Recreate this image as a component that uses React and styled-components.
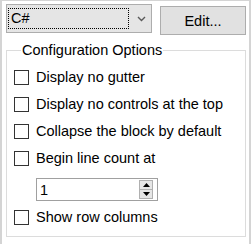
import React from "react";
import styled, { createGlobalStyle } from "styled-components";

const Global = createGlobalStyle`
  html, body { margin: 0; padding: 0; background: #ffffff; }
  body { font-family: "Liberation Sans", Arial, sans-serif; font-size: 14.5px; color: #000; }
`;

const Frame = styled.div`
  box-sizing: border-box;
  width: 251px;
  height: 244px;
  border-top: 1px solid #d4d4d4;
  border-left: 2px solid #d4d4d4;
  border-right: 2px solid #d4d4d4;
  padding: 3px 0 0 4px;
  background: #fff;
`;

const TopBar = styled.div`
  display: flex;
  align-items: flex-start;
`;

const Combo = styled.div`
  box-sizing: border-box;
  width: 146px;
  height: 29px;
  border: 1px solid #adadad;
  background: #e5e5e5;
  display: flex;
  align-items: center;
  padding: 0 0 0 1px;
`;

const ComboValue = styled.div`
  box-sizing: border-box;
  flex: 0 0 121px;
  height: 21px;
  border: 1px dotted #000;
  display: flex;
  align-items: center;
  padding-left: 2px;
  font-size: 14.5px;
  line-height: 17px;
`;

const ComboArrow = styled.div`
  flex: 1;
  display: flex;
  justify-content: center;
  align-items: center;
  padding-left: 2px;
`;

const Button = styled.div`
  box-sizing: border-box;
  margin-left: 8px;
  margin-top: 2px;
  width: 86px;
  height: 29px;
  border: 1px solid #adadad;
  background: #e1e1e1;
  display: flex;
  align-items: center;
  justify-content: center;
  font-size: 14.5px;
`;

const Group = styled.fieldset`
  box-sizing: border-box;
  margin: 7px 0 0 0;
  width: 240px;
  border: 1px solid #dcdcdc;
  padding: 10px 0 10px 7px;
  display: flex;
  flex-direction: column;
  min-width: 0;
`;

const Legend = styled.legend`
  margin-left: 7px;
  padding: 0 1px;
  font-size: 14.5px;
  line-height: 17px;
`;

const Row = styled.label`
  display: flex;
  align-items: center;
  height: 17px;
  margin-top: ${(p) => p.$mt || 0}px;
  font-size: 14.5px;
  line-height: 17px;
  white-space: nowrap;
`;

const Box = styled.span`
  box-sizing: border-box;
  width: 15px;
  height: 15px;
  border: 1px solid #333333;
  background: #fff;
  margin-right: 7px;
  flex: 0 0 auto;
`;

const Spinner = styled.div`
  box-sizing: border-box;
  margin: ${(p) => p.$mt || 0}px 0 0 22px;
  width: 122px;
  height: 23px;
  border: 1px solid #a0a0a0;
  background: #fff;
  display: flex;
  align-items: stretch;
  padding: 1px 4px 1px 3px;
`;

const SpinValue = styled.div`
  flex: 1;
  display: flex;
  align-items: center;
  font-size: 14.5px;
`;

const SpinButtons = styled.div`
  width: 14px;
  display: flex;
  flex-direction: column;
`;

const SpinBtn = styled.div`
  flex: 1;
  box-sizing: border-box;
  border: 1px solid #b0b0b0;
  background: #e6e6e6;
  display: flex;
  align-items: center;
  justify-content: center;
  & + & { border-top: none; }
`;

const Chevron = () => (
  <svg width="9" height="6" viewBox="0 0 9 6">
    <path d="M1 1 L4.5 4.5 L8 1" fill="none" stroke="#5a5a5a" strokeWidth="1.4" />
  </svg>
);

const Tri = ({ up }) => (
  <svg width="7" height="4" viewBox="0 0 7 4">
    {up ? <path d="M0 4 L3.5 0 L7 4 Z" fill="#000" /> : <path d="M0 0 L3.5 4 L7 0 Z" fill="#000" />}
  </svg>
);

const options = [
  { label: "Display no gutter", mt: 0 },
  { label: "Display no controls at the top", mt: 10 },
  { label: "Collapse the block by default", mt: 10 },
  { label: "Begin line count at", mt: 10 },
];

export default function App() {
  return (
    <>
      <Global />
      <Frame>
        <TopBar>
          <Combo>
            <ComboValue>C#</ComboValue>
            <ComboArrow>
              <Chevron />
            </ComboArrow>
          </Combo>
          <Button>Edit...</Button>
        </TopBar>
        <Group>
          <Legend>Configuration Options</Legend>
          {options.map((o) => (
            <Row key={o.label} $mt={o.mt}>
              <Box />
              {o.label}
            </Row>
          ))}
          <Spinner $mt={11}>
            <SpinValue>1</SpinValue>
            <SpinButtons>
              <SpinBtn>
                <Tri up />
              </SpinBtn>
              <SpinBtn>
                <Tri />
              </SpinBtn>
            </SpinButtons>
          </Spinner>
          <Row $mt={8}>
            <Box />
            Show row columns
          </Row>
        </Group>
      </Frame>
    </>
  );
}
